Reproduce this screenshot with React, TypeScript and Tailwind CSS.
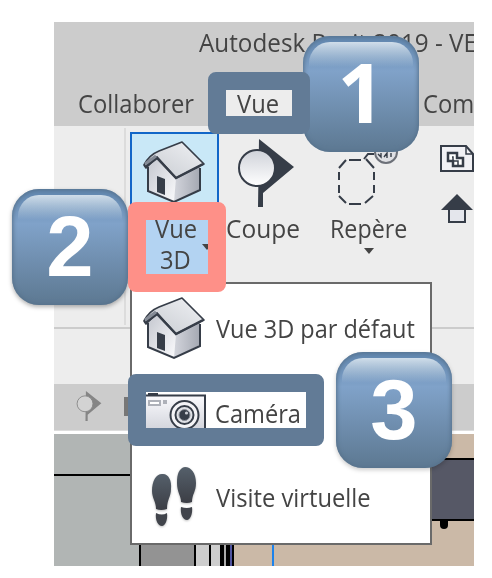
import React from 'react';

const label = 'inline-block whitespace-nowrap origin-left text-[25px] leading-[30px] text-[#444]';

function House({ className }: { className: string }) {
  return (
    <svg viewBox="0 0 64 64" className={className}>
      <defs>
        <linearGradient id="wall" x1="0" y1="0" x2="1" y2="1">
          <stop offset="0" stopColor="#c3c6ce" />
          <stop offset="1" stopColor="#fbfbfd" />
        </linearGradient>
        <linearGradient id="side" x1="0" y1="0" x2="1" y2="0">
          <stop offset="0" stopColor="#d3d5dc" />
          <stop offset="1" stopColor="#a4a8b2" />
        </linearGradient>
        <linearGradient id="roof" x1="0" y1="1" x2="1" y2="0">
          <stop offset="0" stopColor="#c6cad0" />
          <stop offset="1" stopColor="#f0f1f4" />
        </linearGradient>
      </defs>
      <path d="M6 25 L14 17 L34 39 V62 L6 52Z" fill="url(#wall)" />
      <path d="M34 38 L58 25 V49 L32 62Z" fill="url(#side)" />
      <path d="M6 27 V51 L32 62 L58 50 V28" fill="none" stroke="#363d48" strokeWidth="2" />
      <path d="M15 36 L23 39 V55 L15 52Z" fill="#363d48" />
      <path d="M2 25 Q7 15 17 11 L40 2 L62 24 L34 38 L15 17 L4 28Z" fill="url(#roof)" stroke="#363d48" strokeWidth="1.7" strokeLinejoin="round" />
      <path d="M3 27 L15 18 L34 38 L61 24" fill="none" stroke="#363d48" strokeWidth="2.500" />
      <path d="M3 24 L14 16" fill="none" stroke="#858b96" strokeWidth="3" />
    </svg>
  );
}

function Section({ className, fill, line }: { className: string; fill: string; line: string }) {
  return (
    <svg viewBox="0 0 56 68" className={className}>
      <defs>
        <linearGradient id="ball" x1="0" y1="0" x2="0" y2="1">
          <stop offset="0" stopColor="#cfd2d9" />
          <stop offset="1" stopColor="#fff" />
        </linearGradient>
      </defs>
      <path d="M21 0 L56 28 L25 54 V68 H20Z" fill={line} />
      <circle cx="19" cy="29" r="18" fill={fill} stroke={line} strokeWidth="2" />
    </svg>
  );
}

function Callout() {
  return (
    <svg viewBox="0 0 62 80" className="h-[80px] w-[62px]">
      <g fill="none" stroke="#363d48" strokeWidth="2">
        <path d="M12 34 H24 M29 33 L37 42 M37 46 V54 M37 59 V67 M36 70 L28 77 M24 78 H12 M9 77 L2 70 M2 67 V59 M2 54 V46 M2 42 L9 34" />
        <path d="M27 33 L31 28 H37" />
        <circle cx="49" cy="26" r="11" fill="#dfe0e4" stroke="#6c7078" />
        <path d="M41 28 l3 3 v-4 m3 4 l3 -4 v5 m4 -1 v-4" strokeWidth="1.4" />
      </g>
    </svg>
  );
}

function Camera() {
  return (
    <svg viewBox="0 0 62 40" className="-mt-[2px] h-[40px] w-[62px]">
      <defs>
        <linearGradient id="body" x1="0" y1="0" x2="0" y2="1">
          <stop offset="0" stopColor="#fafafd" />
          <stop offset="1" stopColor="#cfd1d9" />
        </linearGradient>
      </defs>
      <path d="M4 1 H14" stroke="#363d48" strokeWidth="2" />
      <path d="M0 3 H61 V40 H0Z" fill="url(#body)" />
      <path d="M0 2.500 H61 V40" fill="none" stroke="#363d48" strokeWidth="2" />
      <rect x="5" y="8" width="11" height="4" fill="#fff" stroke="#aeb1b9" strokeWidth="2" />
      <rect x="19" y="7" width="4" height="4" fill="#aeb1b9" />
      <circle cx="40.500" cy="22" r="14" fill="#f4f4f7" stroke="#363d48" strokeWidth="2" />
      <circle cx="40.500" cy="22" r="9" fill="#dfe1e6" stroke="#363d48" strokeWidth="2" />
      <circle cx="40.500" cy="22" r="5.500" fill="#363d48" stroke="#8b8f98" />
      <circle cx="42.500" cy="20" r="1.600" fill="#c9ccd3" />
    </svg>
  );
}

function Feet() {
  return (
    <svg viewBox="0 0 46 62" className="-mt-[3px] h-[62px] w-[46px] drop-shadow-[0_1px_1px_rgba(0,0,0,0.25)]">
      <defs>
        <linearGradient id="sole" x1="0" y1="0" x2="0" y2="1">
          <stop offset="0" stopColor="#55606b" />
          <stop offset="1" stopColor="#3c3e45" />
        </linearGradient>
      </defs>
      <path d="M11 7 C17 6 21 13 20 22 C20 30 16 32 16 42 Q10 44 5 42 C5 35 1 31 1 24 C1 14 5 7 11 7Z" fill="url(#sole)" />
      <path d="M5 46 Q11 49 16 46 C17 53 14 59 11 59 C7 59 4 53 5 46Z" fill="#41444b" />
      <path d="M34 0 C40 0 45 6 45 16 C45 25 41 27 41 35 Q36 37 30 35 C30 29 26 25 26 16 C26 7 28 1 34 0Z" fill="url(#sole)" />
      <path d="M30 40 Q36 42 41 40 C42 47 39 53 36 53 C32 53 29 47 30 40Z" fill="#41444b" />
    </svg>
  );
}

function Badge({ className, children }: { className: string; children: React.ReactNode }) {
  return (
    <div className={`absolute h-[116px] w-[116px] rounded-[27px] bg-linear-to-b from-[#6086ae] from-0% via-[#80a2c9] via-30% to-[#5f7b95] to-95% p-[6px] shadow-[inset_0_0_4px_1px_#56718b] ${className}`}>
      <div className="flex h-full items-center justify-center rounded-[21px] bg-linear-to-b from-[#d0deea] from-0% to-transparent to-24% leading-none font-bold text-white">
        {children}
      </div>
    </div>
  );
}

export default function App() {
  return (
    <main className="relative h-[578px] w-[492px] overflow-hidden bg-white pt-[22px] pl-[54px] font-['Open_Sans',sans-serif]">
      <div className="flex h-[544px] w-[420px] flex-col overflow-hidden">
        <header className="h-[104px] shrink-0 bg-[#ccc] pt-[5px]">
          <div className="pl-[145px]">
            <span className={`${label} scale-x-[0.97]`}>Autodesk Revit 2019 - VE</span>
          </div>
          <nav className="mt-[25px] flex h-[44px]">
            <div className="w-[154px] shrink-0 pt-[5px] pl-[24px]"><span className={`${label} scale-x-[0.95]`}>Collaborer</span></div>
            <div className="h-[44px] w-[102px] shrink-0 bg-[#ededed] pt-[5px] pl-[29px]"><span className={`${label} scale-x-[0.95] text-[#222]`}>Vue</span></div>
            <div className="shrink-0 pt-[5px] pl-[113px]"><span className={`${label} scale-x-[0.95]`}>Com</span></div>
          </nav>
        </header>

        <section className="flex h-[203px] shrink-0 border-b-2 border-[#ccc] bg-[#ededed]">
          <div className="my-[2px] w-[72px] shrink-0 border-r-2 border-[#dcdcdc]" />
          <div className="mt-[6px] ml-[4px] h-[154px] w-[89px] shrink-0 border-2 border-[#1266c8] bg-[#c9e8f7]">
            <House className="mt-[6px] ml-[10px] h-[64px] w-[64px]" />
            <div className="relative h-[80px] bg-[#b3d3f2] pt-[9px]">
              <div className="h-[31px] pl-[23px]"><span className={`${label} scale-x-[0.95]`}>Vue</span></div>
              <div className="pl-[28px]"><span className={`${label} scale-x-[0.95]`}>3D</span></div>
              <i className="absolute top-[40px] right-[5px] border-x-[5px] border-t-[6px] border-x-transparent border-t-[#444]" />
            </div>
          </div>
          <div className="w-[90px] shrink-0 pt-[13px] pl-[7px]">
            <div className="pl-[12px]"><Section className="h-[68px] w-[56px]" fill="url(#ball)" line="#363d48" /></div>
            <span className={`${label} mt-[6px] scale-x-[0.98]`}>Coupe</span>
          </div>
          <div className="w-[105px] shrink-0 pl-[20px]">
            <div className="pl-[8px]"><Callout /></div>
            <span className={`${label} mt-[7px] ml-[1px] scale-x-[0.93]`}>Repère</span>
            <i className="mt-[4px] ml-[35px] block h-0 w-0 border-x-[5px] border-t-[6px] border-x-transparent border-t-[#444]" />
          </div>
          <div className="flex shrink-0 flex-col gap-[21px] pt-[19px] pl-[26px]">
            <svg viewBox="0 0 36 28" className="h-[28px] w-[36px]">
              <path d="M1 1 H26 L33 9 V26 H1Z" fill="#f1f1f5" stroke="#363d48" strokeWidth="2" />
              <path d="M26 1 V9 H33" fill="none" stroke="#363d48" strokeWidth="1.500" />
              <path d="M8 8 H17 V13 H23 V21 H13 V16 H8Z" fill="#fff" stroke="#363d48" strokeWidth="2.500" />
              <path d="M12 12 H13 V16 H18 V20" fill="none" stroke="#363d48" strokeWidth="1.500" />
            </svg>
            <svg viewBox="0 0 34 30" className="h-[30px] w-[34px]">
              <path d="M1 16 L17 0 L33 16Z" fill="#363d48" />
              <path d="M9 15 H25 V28 H9Z" fill="#e4e6ec" stroke="#363d48" strokeWidth="2" />
            </svg>
          </div>
        </section>

        <div className="h-[55px] shrink-0 bg-[#ededed]" />
        <div className="flex h-[46px] shrink-0 items-center bg-[#ccc] pl-[21px]">
          <Section className="-mt-[2px] h-[30px] w-[28px]" fill="#d3d3d3" line="#858585" />
          <div className="-mt-[2px] ml-[21px] h-[19px] w-[12px] border-b-2 border-l-4 border-[#777]" />
        </div>
        <div className="h-[4px] shrink-0 border-t border-[#ddd] bg-white" />

        <section className="flex h-[132px] shrink-0 bg-[#cbb9a7]">
          <div className="w-[85px] bg-[#b1b5b4]"><div className="h-[42px] border-b-2 border-black" /></div>
          <div className="w-[57px] border-x-2 border-black bg-[#939393]" />
          <div className="w-[13px] bg-[#cdcdcd]" />
          <div className="w-[2px] bg-black" />
          <div className="w-[9px] bg-[#cdcdcd]" />
          <div className="w-[4px] bg-black" />
          <div className="w-[2px] bg-[#aaa]" />
          <div className="w-[4px] bg-black" />
          <div className="w-[2px] bg-[#50549f]" />
          <div className="w-[2px] bg-black" />
          <div className="ml-[38px] w-[2px] bg-[#1c82eb]" />
          <div className="flex-1 pt-[24px] pl-[157px]">
            <div className="h-[63px] border-y-2 border-black bg-[#565866]" />
            <div className="ml-[9px] h-[8px] w-[8px] rounded-b bg-black" />
          </div>
        </section>
      </div>

      <div className="absolute top-[282px] left-[130px] flex h-[263px] w-[302px] flex-col border-2 border-[#6a6a6a] bg-white">
        <div className="flex h-[88px] items-center pl-[10px]">
          <House className="h-[64px] w-[64px]" />
          <span className={`${label} -mt-[1px] ml-[10px] scale-x-[0.94]`}>Vue 3D par défaut</span>
        </div>
        <div className="flex h-[84px] items-center pl-[12px]">
          <Camera />
          <span className={`${label} -mt-[3px] ml-[9px] scale-x-[0.945]`}>Caméra</span>
        </div>
        <div className="flex h-[87px] items-center pl-[19px]">
          <Feet />
          <span className={`${label} -mt-[6px] ml-[19px] scale-x-[0.95]`}>Visite virtuelle</span>
        </div>
      </div>

      <Badge className="top-[36px] left-[303px]"><span className="-mt-[7px] text-[82px]">1</span></Badge>
      <Badge className="top-[189px] left-[12px] drop-shadow-[0_2px_2px_rgba(0,0,0,0.3)]"><span className="-mt-[2px] font-['Liberation_Sans',sans-serif] text-[85px]">2</span></Badge>
      <Badge className="top-[352px] left-[336px] drop-shadow-[0_2px_2px_rgba(0,0,0,0.2)]"><span className="-mt-[2px] font-['Liberation_Sans',sans-serif] text-[85px]">3</span></Badge>

      <div className="absolute top-[72px] left-[208px] h-[62px] w-[102px] rounded-[8px] border-[18px] border-[#627b96]" />
      <div className="absolute top-[202px] left-[128px] h-[90px] w-[98px] rounded-[8px] border-[18px] border-[#fe9088]" />
      <div className="absolute top-[374px] left-[128px] h-[72px] w-[196px] rounded-[8px] border-[18px] border-[#627b96]" />
    </main>
  );
}
